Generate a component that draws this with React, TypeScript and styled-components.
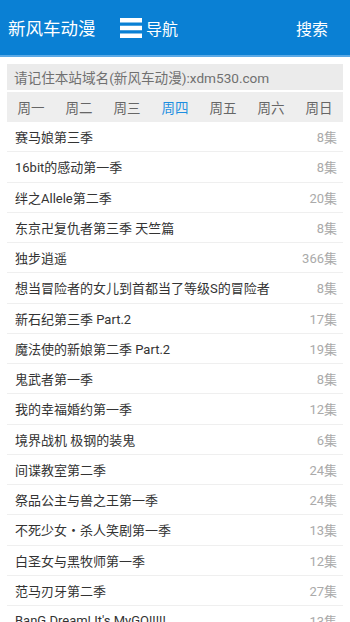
import React from "react";
import styled, { createGlobalStyle } from "styled-components";

const Global = createGlobalStyle`
  html, body { margin: 0; padding: 0; background: #fff; }
  body { font-family: Roboto, "Noto Sans CJK SC", sans-serif; }
  * { box-sizing: border-box; }
`;

const Header = styled.header`
  height: 57px;
  background: #0a80d4;
  border-bottom: 2px solid #5aa9e6;
  display: flex;
  align-items: center;
  padding: 0 22px 0 8px;
  color: #fff;
`;

const Logo = styled.div`
  font-size: 17.5px;
  letter-spacing: 0;
  width: 112px;
`;

const Nav = styled.div`
  display: flex;
  align-items: center;
  gap: 4px;
  font-size: 16px;
  flex: 1;
`;

const Search = styled.div`
  font-size: 16px;
`;

const Notice = styled.div`
  margin: 7px 7px 0;
  height: 26px;
  background: #ebebeb;
  color: #707070;
  font-size: 13.6px;
  display: flex;
  align-items: center;
  padding-left: 7px;
`;

const Tabs = styled.div`
  margin: 2px 7px 0;
  height: 30px;
  background: #eeeeee;
  display: grid;
  grid-template-columns: repeat(7, 1fr);
  align-items: center;
`;

const Tab = styled.div<{ $active?: boolean }>`
  text-align: center;
  font-size: 13.5px;
  color: ${(p) => (p.$active ? "#1d8ee0" : "#666")};
`;

const List = styled.ul`
  list-style: none;
  margin: 0 7px;
  padding: 0;
`;

const Row = styled.li`
  height: 30.25px;
  border-bottom: 1px solid #efefef;
  display: flex;
  align-items: center;
  justify-content: space-between;
  padding: 0 6px 0 8px;
  font-size: 13px;
`;

const Title = styled.span`
  color: #333;
`;

const Count = styled.span`
  color: #aaa;
`;

const MenuIcon = () => (
  <svg width="22" height="20" viewBox="0 0 22 20">
    <rect x="0" y="0" width="22" height="4.5" fill="#fff" />
    <rect x="0" y="7.75" width="22" height="4.5" fill="#fff" />
    <rect x="0" y="15.5" width="22" height="4.5" fill="#fff" />
  </svg>
);

const days = ["周一", "周二", "周三", "周四", "周五", "周六", "周日"];

const items: [string, string][] = [
  ["赛马娘第三季", "8集"],
  ["16bit的感动第一季", "8集"],
  ["绊之Allele第二季", "20集"],
  ["东京卍复仇者第三季 天竺篇", "8集"],
  ["独步逍遥", "366集"],
  ["想当冒险者的女儿到首都当了等级S的冒险者", "8集"],
  ["新石纪第三季 Part.2", "17集"],
  ["魔法使的新娘第二季 Part.2", "19集"],
  ["鬼武者第一季", "8集"],
  ["我的幸福婚约第一季", "12集"],
  ["境界战机 极钢的装鬼", "6集"],
  ["间谍教室第二季", "24集"],
  ["祭品公主与兽之王第一季", "24集"],
  ["不死少女・杀人笑剧第一季", "13集"],
  ["白圣女与黑牧师第一季", "12集"],
  ["范马刃牙第二季", "27集"],
  ["BanG Dream! It's MyGO!!!!!", "13集"],
];

export default function App() {
  return (
    <>
      <Global />
      <Header>
        <Logo>新风车动漫</Logo>
        <Nav>
          <MenuIcon />
          <span>导航</span>
        </Nav>
        <Search>搜索</Search>
      </Header>
      <Notice>请记住本站域名(新风车动漫):xdm530.com</Notice>
      <Tabs>
        {days.map((d) => (
          <Tab key={d} $active={d === "周四"}>
            {d}
          </Tab>
        ))}
      </Tabs>
      <List>
        {items.map(([t, c]) => (
          <Row key={t}>
            <Title>{t}</Title>
            <Count>{c}</Count>
          </Row>
        ))}
      </List>
    </>
  );
}
